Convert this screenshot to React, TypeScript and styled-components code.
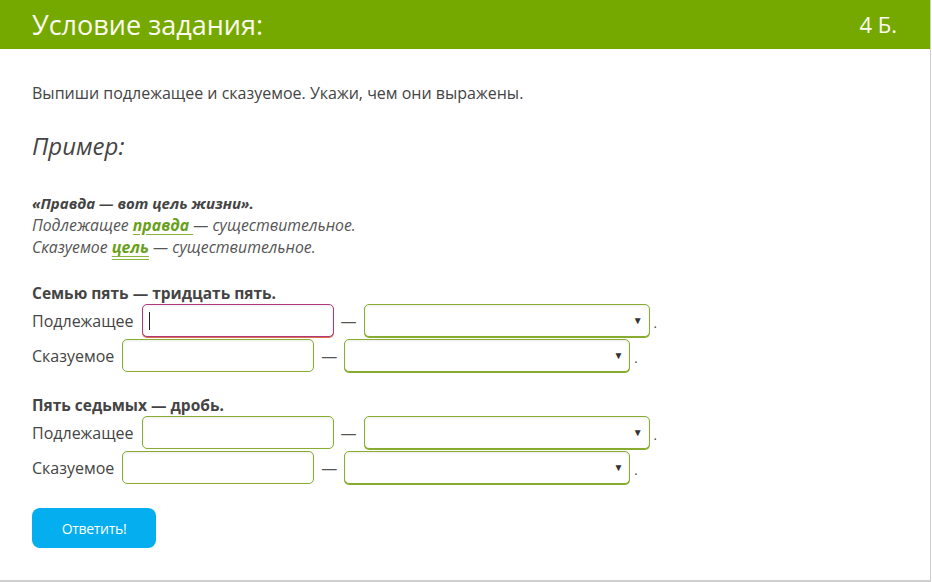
import React from "react";
import styled, { createGlobalStyle } from "styled-components";

const Global = createGlobalStyle`
  html, body { margin: 0; padding: 0; background: #fff; }
  body { font-family: "Open Sans", "Noto Sans", sans-serif; color: #444; }
`;

const Card = styled.div`
  width: 930px;
  height: 580px;
  border-right: 1px solid #cfcfcf;
  border-bottom: 2px solid #cfcfcf;
  display: flex;
  flex-direction: column;
`;

const Header = styled.header`
  height: 49px;
  background: #76a900;
  color: #fbfbf2;
  display: flex;
  align-items: center;
  justify-content: space-between;
  padding: 0 33px 0 32px;
  box-sizing: border-box;
`;

const Title = styled.h1`
  margin: 0;
  font-size: 27px;
  font-weight: 400;
  line-height: 49px;
`;

const Points = styled.span`
  font-size: 22px;
  line-height: 49px;
`;

const Body = styled.main`
  padding: 33px 32px 0;
  display: flex;
  flex-direction: column;
`;

const Instruction = styled.p`
  margin: 0;
  font-size: 16px;
  line-height: 22px;
  color: #444;
`;

const ExampleTitle = styled.h2`
  margin: 26px 0 0;
  font-size: 24px;
  font-weight: 400;
  font-style: italic;
  line-height: 32px;
  color: #444;
`;

const ExampleBlock = styled.div`
  margin-top: 30px;
  font-size: 15.8px;
  line-height: 22px;
  font-style: italic;
  color: #555;
`;

const Quote = styled.div`
  font-size: 15px;
  font-weight: 700;
  color: #444;
`;

const Answer = styled.span<{ $double?: boolean }>`
  font-weight: 700;
  color: #69a01a;
  text-decoration: underline;
  text-decoration-style: ${(p) => (p.$double ? "double" : "solid")};
  text-decoration-color: #8bb33a;
  text-underline-offset: 3px;
`;

const Group = styled.section<{ $top: number }>`
  margin-top: ${(p) => p.$top}px;
  display: flex;
  flex-direction: column;
  gap: 2px;
`;

const GroupTitle = styled.div`
  font-size: 15.5px;
  font-weight: 700;
  line-height: 22px;
  color: #444;
  margin-bottom: -2px;
`;

const Row = styled.div`
  display: flex;
  align-items: center;
  height: 33px;
  font-size: 16px;
  color: #444;
`;

const Label = styled.span`
  margin-right: 8px;
`;

const FieldWrap = styled.span<{ $focused?: boolean }>`
  position: relative;
  display: inline-flex;
  ${(p) =>
    p.$focused
      ? `&::after {
    content: "";
    position: absolute;
    left: 7px;
    top: 8px;
    width: 1px;
    height: 18px;
    background: #222;
  }`
      : ""}
`;

const TextInput = styled.input<{ $focused?: boolean }>`
  width: 192px;
  height: 33px;
  box-sizing: border-box;
  border: 1.5px solid ${(p) => (p.$focused ? "#b0397a" : "#87ac2f")};
  border-radius: 5px;
  background: #fff;
  box-shadow: inset 0 1px 3px rgba(0, 0, 0, 0.08)
    ${(p) => (p.$focused ? ", 0 1px 0 #d8704a" : "")};
  outline: none;
  padding: 0 6px;
  font: inherit;
`;

const Dash = styled.span`
  margin: 0 7px;
  color: #555;
`;

const Select = styled.div`
  width: 286px;
  height: 33px;
  box-sizing: border-box;
  border: 1.5px solid #87ac2f;
  border-radius: 5px;
  background: #fff;
  box-shadow: inset 0 1px 3px rgba(0, 0, 0, 0.08), 0 1px 0 #87ac2f;
  display: flex;
  align-items: center;
  justify-content: flex-end;
  padding-right: 6px;
`;

const Arrow = styled.span`
  font-size: 10px;
  color: #333;
  line-height: 1;
  margin-top: -1px;
`;

const Dot = styled.span`
  margin-left: 4px;
  margin-top: 4px;
  font-size: 13px;
  color: #444;
`;

const Button = styled.button`
  margin-top: 24px;
  width: 124px;
  height: 40px;
  border: none;
  border-radius: 8px;
  background: #05aeee;
  color: #fff;
  font-family: "Open Sans", sans-serif;
  font-size: 14px;
  letter-spacing: -0.3px;
  cursor: pointer;
  align-self: flex-start;
`;

type Task = { title: string; top: number; focused?: boolean };

const tasks: Task[] = [
  { title: "Семью пять — тридцать пять.", top: 24, focused: true },
  { title: "Пять седьмых — дробь.", top: 22 },
];

function AnswerRow({ label, focused }: { label: string; focused?: boolean }) {
  return (
    <Row>
      <Label>{label}</Label>
      <FieldWrap $focused={focused}>
        <TextInput $focused={focused} />
      </FieldWrap>
      <Dash>—</Dash>
      <Select>
        <Arrow>▼</Arrow>
      </Select>
      <Dot>.</Dot>
    </Row>
  );
}

export default function App() {
  return (
    <>
      <Global />
      <Card>
        <Header>
          <Title>Условие задания:</Title>
          <Points>4 Б.</Points>
        </Header>
        <Body>
          <Instruction>
            Выпиши подлежащее и сказуемое. Укажи, чем они выражены.
          </Instruction>
          <ExampleTitle>Пример:</ExampleTitle>
          <ExampleBlock>
            <Quote>«Правда — вот цель жизни».</Quote>
            <div>
              Подлежащее <Answer>правда </Answer>— существительное.
            </div>
            <div>
              Сказуемое <Answer $double>цель</Answer> — существительное.
            </div>
          </ExampleBlock>
          {tasks.map((t) => (
            <Group key={t.title} $top={t.top}>
              <GroupTitle>{t.title}</GroupTitle>
              <AnswerRow label="Подлежащее" focused={t.focused} />
              <AnswerRow label="Сказуемое" />
            </Group>
          ))}
          <Button>Ответить!</Button>
        </Body>
      </Card>
    </>
  );
}
